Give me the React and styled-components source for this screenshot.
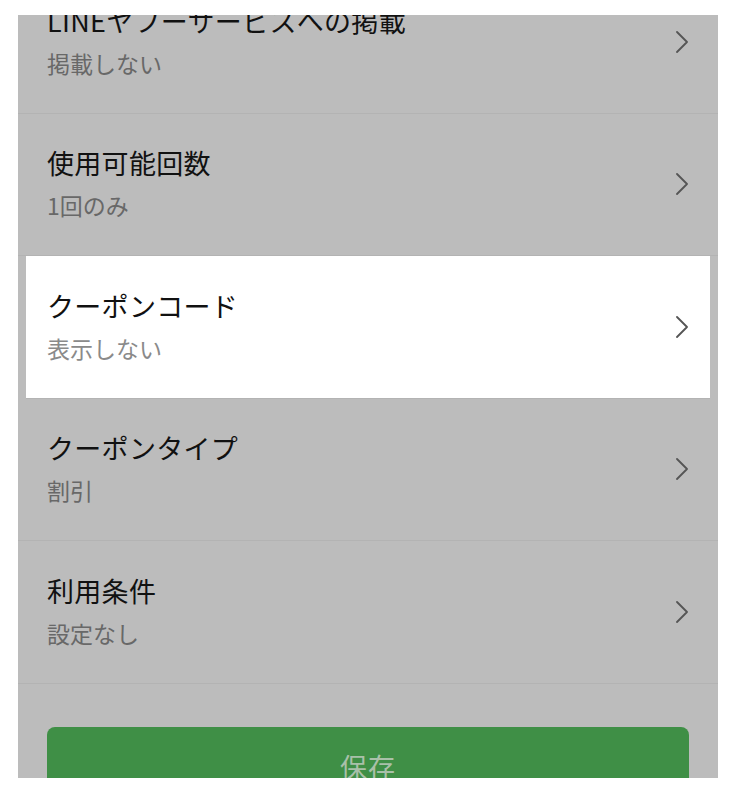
import React from "react";
import styled, { createGlobalStyle } from "styled-components";

const Global = createGlobalStyle`
  html, body { margin: 0; padding: 0; background: #ffffff; }
  body { font-family: "Noto Sans CJK JP", "Noto Sans", sans-serif; }
  * { box-sizing: border-box; }
`;

const Page = styled.div`
  padding: 15px 18px 16px;
  background: #ffffff;
`;

const Panel = styled.div`
  height: 763px;
  overflow: hidden;
  background: #bcbcbc;
`;

const List = styled.div`
  margin-top: -44px;
  display: flex;
  flex-direction: column;
`;

const Row = styled.div`
  height: 142.5px;
  display: flex;
  align-items: center;
  justify-content: space-between;
  border-bottom: 1px solid #b3b3b3;
  padding: ${(p) => (p.$active ? "0 22px 0 21px" : "0 30px 0 29px")};
  margin: ${(p) => (p.$active ? "0 8px" : "0")};
  background: ${(p) => (p.$active ? "#ffffff" : "transparent")};
  ${(p) => (p.$active ? "border-bottom-color: #b3b3b3;" : "")}
`;

const Texts = styled.div`
  display: flex;
  flex-direction: column;
  padding-bottom: 2px;
`;

const Title = styled.div`
  font-size: 27px;
  line-height: 44px;
  color: #111111;
  letter-spacing: 0.3px;
`;

const Sub = styled.div`
  font-size: 23px;
  line-height: 40px;
  color: ${(p) => (p.$active ? "#8a8a8a" : "#686868")};
`;

const Chevron = styled.svg`
  width: 12px;
  height: 22px;
  flex: none;
`;

const ButtonWrap = styled.div`
  padding: 43px 29px 0;
`;

const SaveButton = styled.div`
  height: 80px;
  border-radius: 8px;
  background: #3f8f46;
  color: #a9c0a9;
  font-size: 27px;
  display: flex;
  align-items: center;
  justify-content: center;
  letter-spacing: 1px;
`;

const items = [
  { title: "LINEヤフーサービスへの掲載", sub: "掲載しない" },
  { title: "使用可能回数", sub: "1回のみ" },
  { title: "クーポンコード", sub: "表示しない", active: true },
  { title: "クーポンタイプ", sub: "割引" },
  { title: "利用条件", sub: "設定なし" },
];

const Arrow = () => (
  <Chevron viewBox="0 0 12 22">
    <path d="M1 1 L11 11 L1 21" fill="none" stroke="#555555" strokeWidth="1.8" strokeLinecap="round" strokeLinejoin="round" />
  </Chevron>
);

export default function App() {
  return (
    <>
      <Global />
      <Page>
        <Panel>
          <List>
            {items.map((it) => (
              <Row key={it.title} $active={it.active}>
                <Texts>
                  <Title>{it.title}</Title>
                  <Sub $active={it.active}>{it.sub}</Sub>
                </Texts>
                <Arrow />
              </Row>
            ))}
          </List>
          <ButtonWrap>
            <SaveButton>保存</SaveButton>
          </ButtonWrap>
        </Panel>
      </Page>
    </>
  );
}
